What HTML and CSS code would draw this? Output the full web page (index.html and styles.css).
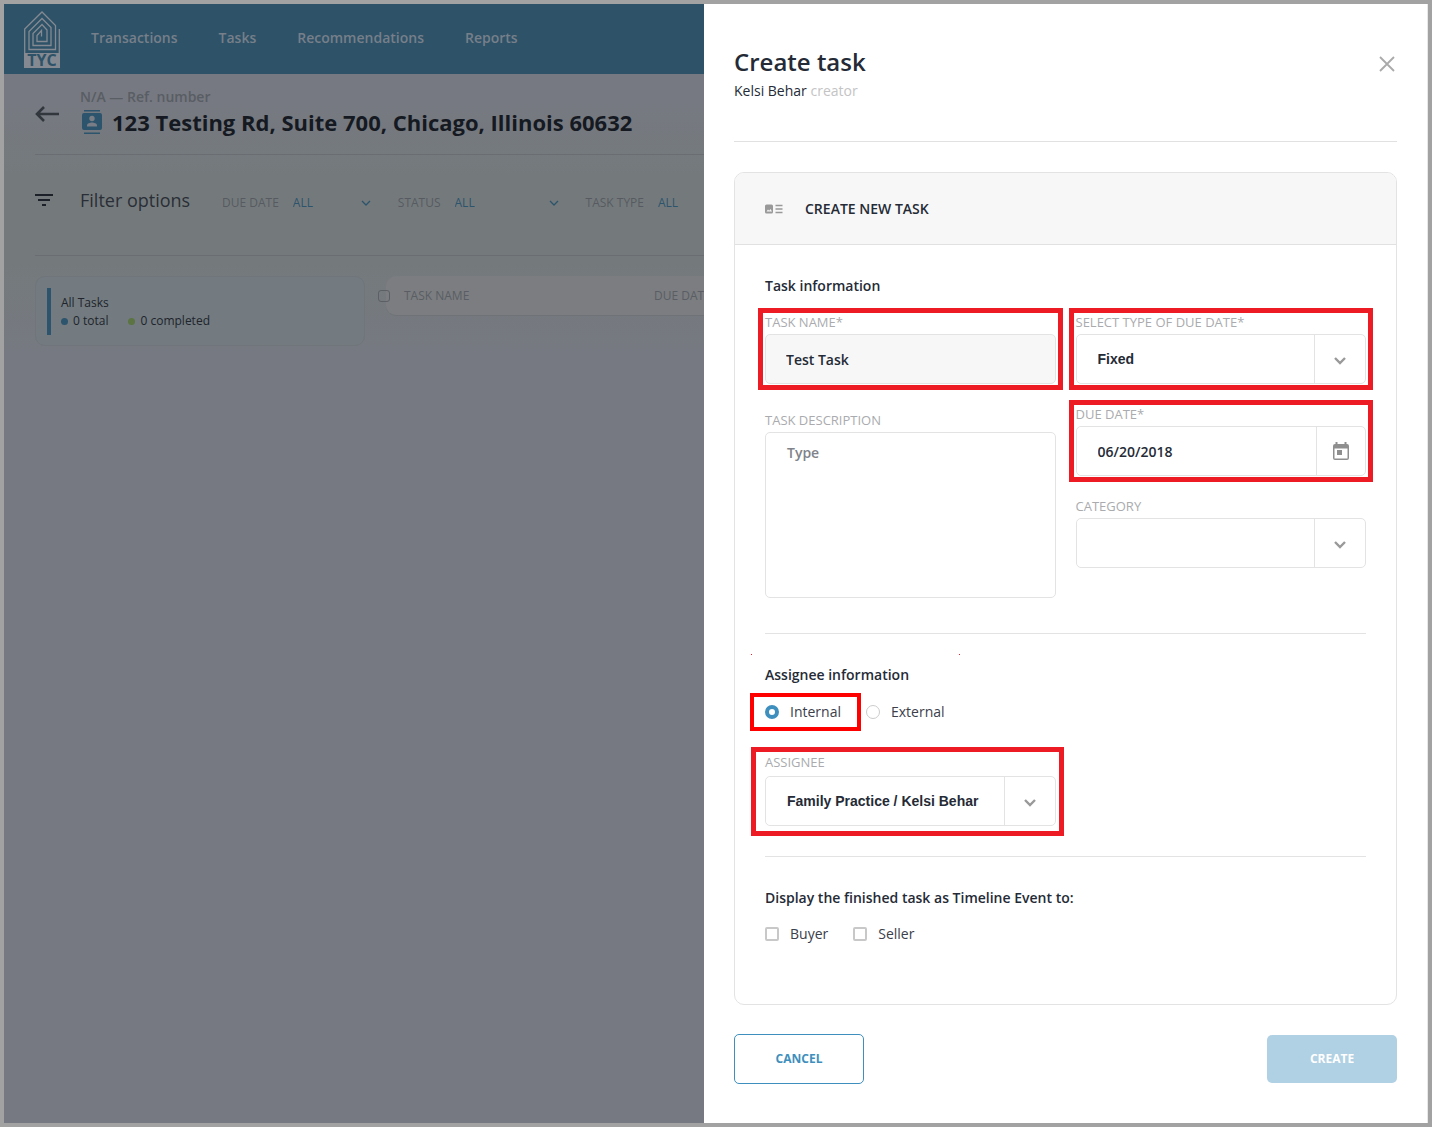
FILE: index.html
```html
<!DOCTYPE html>
<html lang="en">
<head>
<meta charset="utf-8">
<meta name="viewport" content="width=device-width, initial-scale=1">
<title>Create task</title>
<link rel="stylesheet" href="styles.css">
</head>
<body>
<div class="app">
  <div class="page">
    <header class="topbar">
      <a class="logo" href="#" aria-label="TYC home">
        <svg width="36" height="57" viewBox="0 0 36 57">
          <path d="M.7 42V18L18 1l13.500 13.500V38.500H5V20.500L18 7.500l9 9V34.500H9V22.500l9-9 5 5.500V30.500H13V24.500l4.500-5v6M35.300 18v24" fill="none" stroke="#858a92" stroke-width="1.300"/>
          <rect y="42" width="36" height="15" fill="#858a92"/>
          <text x="18" y="55" text-anchor="middle" class="logo-text">TYC</text>
        </svg>
      </a>
      <nav class="nav">
        <a href="#">Transactions</a>
        <a href="#">Tasks</a>
        <a href="#">Recommendations</a>
        <a href="#">Reports</a>
      </nav>
    </header>
    <main class="content">
      <div class="heading">
        <a class="back" href="#" aria-label="Back">
          <svg width="24" height="16" viewBox="0 0 24 16" fill="none" stroke="#32363d" stroke-width="2.600"><path d="M24 8H2M9 1L2 8l7 7"/></svg>
        </a>
        <div class="heading-text">
          <p class="ref"><b>N/A</b> — Ref. number</p>
          <h1 class="address">
            <svg width="20" height="24" viewBox="0 0 20 24"><path d="M2 0h16v1.500H2zM2 22.500h16V24H2zM2 3h16a2 2 0 0 1 2 2v13a2 2 0 0 1-2 2H2a2 2 0 0 1-2-2V5a2 2 0 0 1 2-2z" fill="#2c546c"/><circle cx="10" cy="8.500" r="2.700" fill="#797d85"/><path d="M5 16.500v-1.200c0-1.900 3-2.800 5-2.800s5 .9 5 2.800v1.200z" fill="#797d85"/></svg>
            123 Testing Rd, Suite 700, Chicago, Illinois 60632
          </h1>
        </div>
      </div>
      <div class="filters">
        <svg class="filter-icon" width="18" height="12" viewBox="0 0 18 12"><path d="M0 0h18v2H0zM3 5h12v2H3zM7 10h4v2H7z" fill="#1c2028"/></svg>
        <h2 class="filters-title">Filter options</h2>
        <div class="filter">
          <label for="f-due">DUE DATE</label>
          <span class="filter-pick"><select id="f-due"><option>ALL</option></select><svg width="10" height="6" viewBox="0 0 10 6"><path d="M1 1l4 4 4-4"/></svg></span>
        </div>
        <div class="filter filter-wide">
          <label for="f-status">STATUS</label>
          <span class="filter-pick"><select id="f-status"><option>ALL</option></select><svg width="10" height="6" viewBox="0 0 10 6"><path d="M1 1l4 4 4-4"/></svg></span>
        </div>
        <div class="filter filter-wide">
          <label for="f-type">TASK TYPE</label>
          <span class="filter-pick"><select id="f-type"><option>ALL</option></select><svg width="10" height="6" viewBox="0 0 10 6"><path d="M1 1l4 4 4-4"/></svg></span>
        </div>
      </div>
      <div class="board">
        <section class="summary">
          <div class="summary-body">
            <p>All Tasks</p>
            <p class="counts"><span class="count">0 total</span><span class="count done">0 completed</span></p>
          </div>
        </section>
        <div class="list">
          <input class="pick-all" type="checkbox" aria-label="Select all tasks">
          <table class="tasks"><thead><tr><th>TASK NAME</th><th>DUE DATE</th></tr></thead></table>
        </div>
      </div>
    </main>
  </div>

  <aside class="drawer">
    <header class="drawer-head">
      <div>
        <h2 class="drawer-title">Create task</h2>
        <p class="creator">Kelsi Behar <span>creator</span></p>
      </div>
      <button class="close" type="button" aria-label="Close"><svg width="16" height="16" viewBox="0 0 16 16"><path d="M1 1l14 14M15 1L1 15" stroke="#aaa" stroke-width="1.800"/></svg></button>
    </header>
    <form>
      <div class="card">
        <div class="card-head">
          <svg width="18" height="10" viewBox="0 0 18 10"><path d="M1.500.5h5A1.500 1.500 0 0 1 8 2v6a1.500 1.500 0 0 1-1.500 1.500h-5A1.500 1.500 0 0 1 0 8V2A1.500 1.500 0 0 1 1.500.5z" fill="#999"/><path d="M1.500 7.500l1.500-2 1.200 1.300L5.500 5l1.500 2.500z" fill="#f7f7f7"/><path d="M10.500 1.500H17.500M10.500 5H17.500M10.500 8.500H17.500" stroke="#999" stroke-width="1.700"/></svg>
          <h3>CREATE NEW TASK</h3>
        </div>
        <div class="card-body">
          <section class="section">
            <h4>Task information</h4>
            <div class="columns">
              <div class="column column-left">
                <div class="field marked">
                  <label for="name">TASK NAME*</label>
                  <input class="control filled" id="name" type="text" value="Test Task">
                </div>
                <div class="field grow">
                  <label for="desc">TASK DESCRIPTION</label>
                  <textarea class="control" id="desc" placeholder="Type"></textarea>
                </div>
              </div>
              <div class="column">
                <div class="field marked">
                  <label for="type">SELECT TYPE OF DUE DATE*</label>
                  <div class="combo">
                    <select class="control" id="type"><option>Fixed</option></select>
                    <span class="addon"><svg width="12" height="8" viewBox="0 0 12 8"><path d="M1 1l5 5 5-5"/></svg></span>
                  </div>
                </div>
                <div class="field marked">
                  <label for="due">DUE DATE*</label>
                  <div class="combo">
                    <input class="control" id="due" type="text" value="06/20/2018">
                    <button class="addon" type="button" aria-label="Pick a date"><svg width="16" height="18" viewBox="0 0 16 18"><path d="M2 2h12a2 2 0 0 1 2 2v12a2 2 0 0 1-2 2H2a2 2 0 0 1-2-2V4a2 2 0 0 1 2-2zm-.5 4.500v10h13v-10z" fill="#8f8f8f" fill-rule="evenodd" stroke="none"/><path d="M2.500 0h2v3h-2zM11.500 0h2v3h-2zM4 8h5v5H4z" fill="#8f8f8f" stroke="none"/></svg></button>
                  </div>
                </div>
                <div class="field">
                  <label for="cat">CATEGORY</label>
                  <div class="combo">
                    <select class="control" id="cat"><option></option></select>
                    <span class="addon"><svg width="12" height="8" viewBox="0 0 12 8"><path d="M1 1l5 5 5-5"/></svg></span>
                  </div>
                </div>
              </div>
            </div>
          </section>
          <section class="section assignee">
            <h4>Assignee information</h4>
            <div class="choices radios">
              <label class="choice marked-choice"><input type="radio" name="who" checked>Internal</label>
              <label class="choice"><input type="radio" name="who">External</label>
            </div>
            <div class="columns">
              <div class="field marked marked-large">
                <label for="assignee">ASSIGNEE</label>
                <div class="combo">
                  <select class="control" id="assignee"><option>Family Practice / Kelsi Behar</option></select>
                  <span class="addon"><svg width="12" height="8" viewBox="0 0 12 8"><path d="M1 1l5 5 5-5"/></svg></span>
                </div>
              </div>
            </div>
          </section>
          <section class="section">
            <h4>Display the finished task as Timeline Event to:</h4>
            <div class="choices">
              <label class="choice"><input type="checkbox">Buyer</label>
              <label class="choice"><input type="checkbox">Seller</label>
            </div>
          </section>
        </div>
      </div>
      <div class="actions">
        <button class="button" type="button">CANCEL</button>
        <button class="button primary" type="submit">CREATE</button>
      </div>
    </form>
  </aside>
</div>
</body>
</html>
```
FILE: styles.css
```css
* { box-sizing: border-box; }
body {
  margin: 0;
  font-family: "Open Sans", "Noto Sans", sans-serif;
  font-size: 14px;
  line-height: 20px;
  color: #252b36;
}
h1, h2, h3, h4, p { margin: 0; }
a { color: inherit; text-decoration: none; }
button, input, select, textarea { font: inherit; color: inherit; margin: 0; }
svg { display: block; flex: none; }

.app {
  display: grid;
  grid-template-columns: minmax(0, 1fr) 724px;
  min-height: 100vh;
  border: 4px solid #a2a2a2;
}

/* Dimmed page behind the drawer */
.page {
  overflow: hidden;
  white-space: nowrap;
  background: linear-gradient(#767981 100px, #747a7c 170px, #747a7c 260px, #767981 350px);
}
.topbar {
  display: flex;
  align-items: center;
  gap: 31px;
  height: 70px;
  padding-left: 20px;
  background: #2e5267;
}
.logo svg { overflow: visible; }
.logo-text { font-size: 16px; font-weight: 700; fill: #2e5267; }
.nav { display: flex; gap: 41px; font-weight: 600; color: #767f8a; }
.nav a { padding-bottom: 2px; }
.content { padding-left: 31px; }
.heading {
  display: flex;
  align-items: center;
  gap: 21px;
  height: 81px;
  border-bottom: 1px solid #6a6e73;
}
.heading-text { padding-bottom: 4px; }
.ref { color: #595d64; font-weight: 600; }
.ref b { font-weight: inherit; }
.address {
  display: flex;
  align-items: center;
  gap: 10px;
  padding-left: 2px;
  font-size: 22px;
  line-height: 30px;
  font-weight: 700;
  color: #151921;
}
.filters {
  display: flex;
  align-items: center;
  height: 101px;
  padding-bottom: 10px;
  border-bottom: 1px solid #6a6e73;
}
.filters-title { flex: none; width: 142px; margin-left: 27px; font-size: 18px; line-height: 24px; font-weight: 400; color: #2a2e36; }
.filter { display: flex; flex: none; gap: 14px; margin-right: 27px; font-size: 12px; color: #575b61; padding-top: 5px; }
.filter-pick { display: flex; align-items: center; width: 78px; color: #2c546c; }
.filter-wide .filter-pick { width: 104px; }
.filter select { appearance: none; flex: 1; min-width: 0; padding: 0; border: 0; background: none; }
.filter svg { fill: none; stroke: #2c546c; stroke-width: 1.3; }
.board { display: flex; align-items: flex-start; gap: 21px; padding-top: 20px; }
.summary {
  width: 330px;
  flex: none;
  padding: 11px 11px 10px;
  border: 1px solid #6f757b;
  border-radius: 10px;
  background: #737b80;
}
.summary-body { padding: 6px 0 5px 10px; border-left: 4px solid #2c546c; font-size: 12px; line-height: 18px; color: #20242c; }
.counts { display: flex; gap: 20px; }
.count { display: flex; align-items: center; gap: 5px; }
.count::before { content: ""; width: 7px; height: 7px; border-radius: 50%; background: #2c546c; }
.count.done::before { background: #5b7442; }
.list { position: relative; flex: none; width: 640px; }
.pick-all {
  appearance: none;
  position: absolute;
  top: 14px;
  left: -8px;
  width: 12px;
  height: 12px;
  border: 1px solid #5c6066;
  border-radius: 3px;
}
.tasks { width: 100%; height: 40px; border-spacing: 0; border-bottom: 1px solid #6f7377; border-radius: 10px; background: #7b7d80; }
.tasks th { padding: 0 0 0 18px; text-align: left; font-size: 12px; font-weight: 400; color: #5a5e64; }
.tasks th:first-child { width: 250px; }

/* Drawer */
.drawer { padding: 42px 30px 39px; border-right: 1px solid #e8e8e8; background: #fff; }
.drawer-head { display: flex; justify-content: space-between; padding-bottom: 40px; margin-bottom: 30px; border-bottom: 1px solid #e1e1e1; }
.drawer-title { font-size: 24px; line-height: 32px; font-weight: 600; }
.creator { padding-top: 3px; }
.creator span { color: #c4c4c4; }
.close { display: grid; place-items: center; width: 20px; height: 36px; padding: 0; border: 0; background: none; }
.card { border: 1px solid #e3e3e3; border-radius: 10px; overflow: hidden; }
.card-head { display: flex; align-items: center; gap: 22px; height: 72px; padding: 0 30px; border-bottom: 1px solid #e1e1e1; background: #f7f7f7; }
.card-head h3 { font-size: 14px; font-weight: 600; }
.card-body { padding: 0 30px 60px; }
.section { padding-top: 31px; }
.section + .section { border-top: 1px solid #e3e3e3; }
h4 { margin-bottom: 16px; font-size: 14px; font-weight: 600; }
.columns { display: grid; grid-template-columns: 1fr 1fr; gap: 20px; padding-bottom: 35px; }
.column { display: flex; flex-direction: column; gap: 20px; }
.column-left { gap: 26px; }
.field { position: relative; display: flex; flex-direction: column; gap: 2px; }
.field label { font-size: 13px; line-height: 20px; color: #aaabae; }
.grow { flex: 1; }
.control {
  width: 100%;
  height: 50px;
  padding: 0 20px;
  border: 1px solid #e3e3e3;
  border-radius: 5px;
  background: #fff;
  font-weight: 600;
}
.filled { background: #f7f7f7; }
textarea.control { display: block; flex: 1; min-height: 166px; padding: 10px 21px; resize: none; }
textarea::placeholder { color: #80838a; opacity: 1; }
.combo { display: flex; height: 50px; border: 1px solid #e3e3e3; border-radius: 5px; }
.combo .control { appearance: none; flex: 1; min-width: 0; height: 48px; padding: 0 0 0 21px; border: 0; }
select.control { font-family: "Liberation Sans", Arial, sans-serif; font-weight: 700; }
.addon { display: grid; place-items: center; width: 51px; padding: 3px 0 0; border: 0; border-left: 1px solid #e3e3e3; background: none; }
button.addon { width: 49px; padding: 0; }
.addon svg { fill: none; stroke: #999; stroke-width: 2.4; }
.choices { display: flex; gap: 25px; }
.choice { position: relative; display: flex; align-items: center; gap: 11px; color: #3b404a; }
.choice input { appearance: none; width: 14px; height: 14px; border: 2px solid #c8c8c8; border-radius: 2px; }
.choice input[type="radio"] { border: 1px solid #ccc; border-radius: 50%; }
.choice input[type="radio"]:checked { border: 4px solid #3e8fbd; }
.assignee { position: relative; }
.assignee h4 { margin-bottom: 17px; }
.assignee .columns { padding-bottom: 30px; }
.assignee .field { gap: 4px; }
.radios { margin-bottom: 30px; }

/* Red call-outs drawn around the fields */
.marked::after, .marked-choice::after {
  content: "";
  position: absolute;
  inset: -4px -7px -6px;
  border: 5px solid #ed1c24;
  pointer-events: none;
}
.marked-large::after { inset: -5px -8px -10px -14px; }
.marked-choice::after { inset: -9px -20px -9px -15px; border: 4px solid #f00; }
.assignee::before, .assignee::after {
  content: "";
  position: absolute;
  top: 20px;
  left: -14px;
  width: 1px;
  height: 1px;
  background: #ed1c24;
}
.assignee::after { left: 194px; }

.actions { display: flex; justify-content: space-between; align-items: center; padding-top: 29px; }
.button { width: 130px; height: 50px; border: 1px solid #3e8fbd; border-radius: 5px; background: #fff; color: #3e8fbd; font-size: 12px; font-weight: 700; }
.primary { height: 48px; border: 0; background: #b0d0e3; color: #fff; }
```
